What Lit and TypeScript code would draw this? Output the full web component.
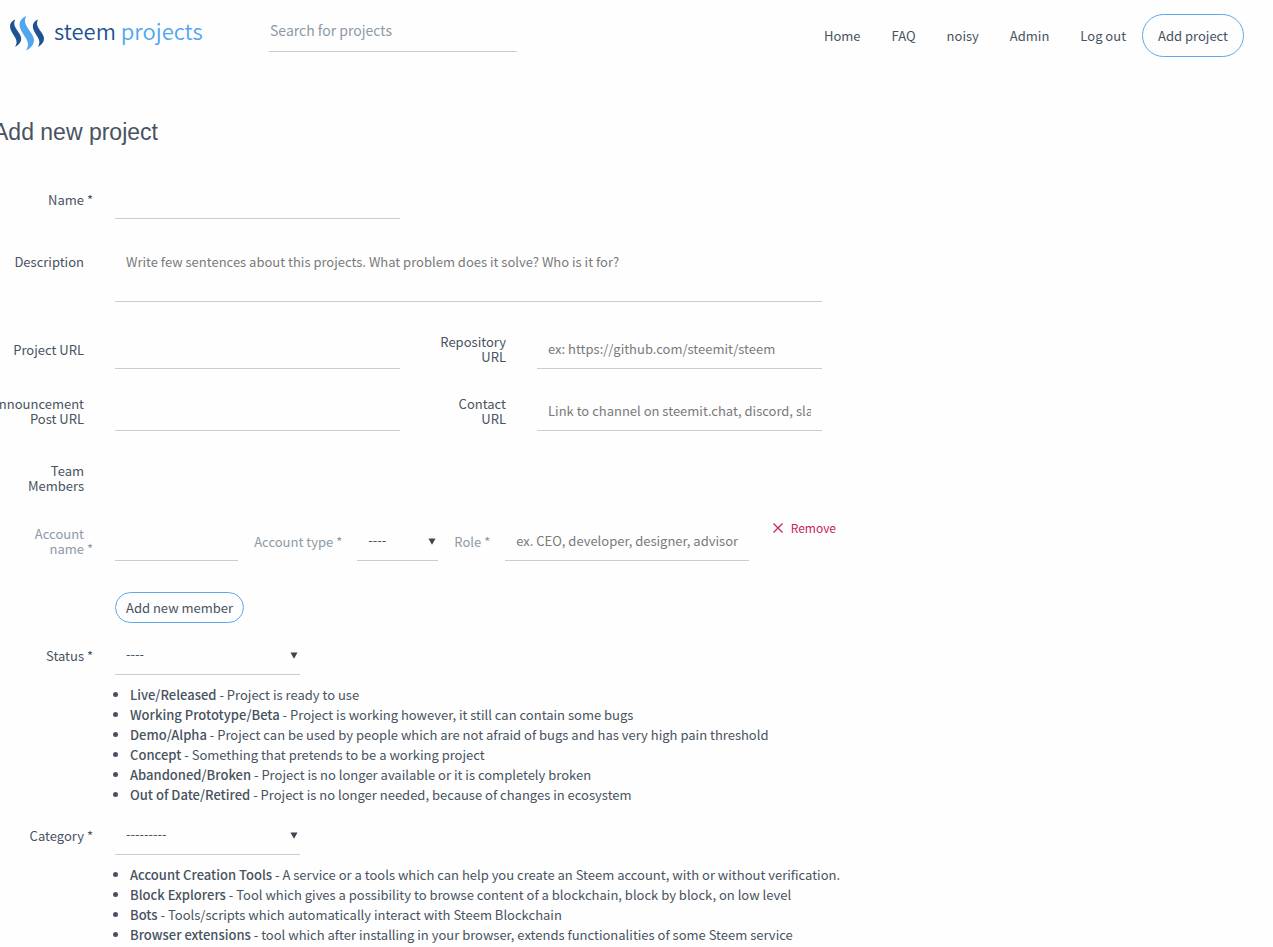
import { LitElement, html, css, svg } from "lit";
import { customElement } from "lit/decorators.js";

type Entry = [name: string, text: string];

const STATUSES: Entry[] = [
  ["Live/Released", "Project is ready to use"],
  ["Working Prototype/Beta", "Project is working however, it still can contain some bugs"],
  ["Demo/Alpha", "Project can be used by people which are not afraid of bugs and has very high pain threshold"],
  ["Concept", "Something that pretends to be a working project"],
  ["Abandoned/Broken", "Project is no longer available or it is completely broken"],
  ["Out of Date/Retired", "Project is no longer needed, because of changes in ecosystem"],
];

const CATEGORIES: Entry[] = [
  ["Account Creation Tools", "A service or a tools which can help you create an Steem account, with or without verification."],
  ["Block Explorers", "Tool which gives a possibility to browse content of a blockchain, block by block, on low level"],
  ["Bots", "Tools/scripts which automatically interact with Steem Blockchain"],
  ["Browser extensions", "tool which after installing in your browser, extends functionalities of some Steem service"],
];

const wave = svg`<path d="M5.2 0C1.5 1.6 0 4 0 7C0 10.5 2.5 13.5 4.8 17.5C6.8 21 7.4 23.5 5 27.4C9 25.4 11.2 22.5 11.2 19.2C11.2 15.8 8.4 13 6 9C4 5.6 3.6 3.4 5.2 0Z"/>`;

@customElement("app-root")
export class AppRoot extends LitElement {
  static styles = css`
    :host {
      display: block;
      overflow: hidden;
      min-height: 100vh;
      background: #fefefe;
      color: #48535f;
      font: 13px/15px "Noto Sans CJK SC", "Noto Sans", sans-serif;
    }
    * { box-sizing: border-box; }
    input, textarea, select, button { font: inherit; color: inherit; }
    a { color: inherit; text-decoration: none; }

    .header {
      display: flex;
      align-items: flex-start;
      padding: 14px 29px 0 10px;
    }
    .logo {
      display: flex;
      align-items: center;
      gap: 9px;
      width: 259px;
      font-size: 22px;
      line-height: 32px;
      font-weight: 350;
      white-space: nowrap;
      color: #1f5293;
    }
    .logo-text { padding-bottom: 6px; }
    .logo-light { color: #52a6ef; }
    .search {
      flex: 0 1 248px;
      height: 38px;
      min-width: 0;
      padding: 0 1px 6px;
      border: 0;
      border-bottom: 1px solid #ccc;
      background: none;
      font-size: 14px;
    }
    .search::placeholder { color: #8d99a6; opacity: 1; }
    .nav {
      display: flex;
      align-items: center;
      gap: 16px;
      margin-left: auto;
    }
    .links { display: flex; gap: 31px; }
    .nav-link { white-space: nowrap; }
    .pill {
      border: 1px solid #5fa8ec;
      border-radius: 22px;
      background: none;
      white-space: nowrap;
    }
    .pill-large { padding: 13px 15px; }
    .pill-small { padding: 7px 10px; border-radius: 16px; }

    .main { margin: 60px 0 0 -10px; }
    .title {
      margin: 0 0 34px;
      padding-left: 3px;
      font: 400 23px/30px "Liberation Sans", sans-serif;
    }
    .row {
      display: grid;
      grid-template-columns: 125px 1fr 137px 1fr;
      align-items: center;
      max-width: 832px;
      margin-bottom: 24px;
    }
    .row-tall { margin-bottom: 29px; }
    .row-choice { margin-bottom: 10px; }
    .label {
      display: block;
      padding: 0 31px 2px 0;
      text-align: right;
    }
    .req { position: relative; }
    .req::after {
      content: "*";
      position: absolute;
      left: 100%;
      padding-left: 3px;
    }
    .field {
      display: block;
      width: 100%;
      min-width: 0;
      height: 38px;
      padding: 0 11px 2px;
      border: 0;
      border-bottom: 1px solid #ccc;
      border-radius: 0;
      background: none;
      outline: none;
    }
    .field::placeholder { color: #7a7a7a; opacity: 1; }
    .area {
      grid-column: 2 / -1;
      height: 59px;
      padding-top: 11px;
      resize: none;
    }
    .area-label { align-self: start; padding-top: 11px; }
    .team { min-height: 48px; margin-bottom: 20px; }

    .select { display: grid; align-items: center; }
    .select > * { grid-area: 1 / 1; }
    .select select { appearance: none; padding-bottom: 4px; }
    .arrow { justify-self: end; margin: 0 2px 2px 0; pointer-events: none; }
    .choice { width: 185px; }

    .member {
      display: grid;
      grid-template-columns: 125px 123fr auto 81fr auto 243fr auto;
      align-items: center;
      max-width: 846px;
      margin-bottom: 31px;
      color: #8d99a6;
    }
    .inline-label { padding: 0 16px 2px; white-space: nowrap; }
    .inline-label .req { margin-right: 8px; }
    .type { color: #48535f; }
    .remove {
      display: flex;
      align-items: center;
      gap: 8px;
      align-self: start;
      margin-left: 24px;
      padding: 0;
      border: 0;
      background: none;
      color: #c4285c;
      font-size: 12px;
      line-height: 10px;
    }
    .add { margin: 0 0 14px 125px; }
    .list {
      margin: 0 0 12px 125px;
      padding: 0 0 0 15px;
      line-height: 20px;
    }
    .list b { font-weight: 500; }
  `;

  private list(entries: Entry[]) {
    return html`<ul class="list">
      ${entries.map(([name, text]) => html`<li><b>${name}</b> - ${text}</li>`)}
    </ul>`;
  }

  private arrow() {
    return html`<svg class="arrow" width="8" height="7" viewBox="0 0 8 7" aria-hidden="true">
      <path d="M0.5 0.5H7.5L4 6.8Z" fill="#3c4650" />
    </svg>`;
  }

  render() {
    return html`
      <header class="header">
        <a class="logo" href="#" aria-label="steem projects">
          <svg width="35" height="38" viewBox="0 0 35 38" aria-hidden="true">
            <g fill="#1f5293" transform="translate(0 5.5)">${wave}</g>
            <g fill="#52a6ef" transform="translate(9.6 2) scale(1.28 1.26)">${wave}</g>
            <g fill="#1f5293" transform="translate(22.8 5.5)">${wave}</g>
          </svg>
          <span class="logo-text">steem <span class="logo-light">projects</span></span>
        </a>
        <input class="search" type="text" aria-label="Search for projects" placeholder="Search for projects" />
        <nav class="nav">
          <div class="links">
            <a class="nav-link" href="#">Home</a>
            <a class="nav-link" href="#">FAQ</a>
            <a class="nav-link" href="#">noisy</a>
            <a class="nav-link" href="#">Admin</a>
            <a class="nav-link" href="#">Log out</a>
          </div>
          <button class="pill pill-large" type="button">Add project</button>
        </nav>
      </header>
      <main class="main">
        <h1 class="title">Add new project</h1>
        <form>
          <div class="row">
            <label class="label" for="name"><span class="req">Name</span></label>
            <input class="field" id="name" type="text" />
          </div>
          <div class="row row-tall">
            <label class="label area-label" for="description">Description</label>
            <textarea class="field area" id="description"
              placeholder="Write few sentences about this projects. What problem does it solve? Who is it for?"></textarea>
          </div>
          <div class="row">
            <label class="label" for="project-url">Project URL</label>
            <input class="field" id="project-url" type="text" />
            <label class="label" for="repo-url">Repository<br />URL</label>
            <input class="field" id="repo-url" type="text" placeholder="ex: https://github.com/steemit/steem" />
          </div>
          <div class="row">
            <label class="label" for="post-url">Announcement<br />Post URL</label>
            <input class="field" id="post-url" type="text" />
            <label class="label" for="contact-url">Contact<br />URL</label>
            <input class="field" id="contact-url" type="text"
              placeholder="Link to channel on steemit.chat, discord, slack" />
          </div>
          <div class="row team">
            <span class="label">Team<br />Members</span>
          </div>
          <div class="member">
            <label class="label" for="account">Account<br /><span class="req">name</span></label>
            <input class="field" id="account" type="text" />
            <label class="inline-label" for="type"><span class="req">Account type</span></label>
            <div class="select type">
              <select class="field" id="type"><option>----</option></select>
              ${this.arrow()}
            </div>
            <label class="inline-label" for="role"><span class="req">Role</span></label>
            <input class="field" id="role" type="text" placeholder="ex. CEO, developer, designer, advisor" />
            <button class="remove" type="button">
              <svg width="10" height="10" viewBox="0 0 10 10" aria-hidden="true">
                <path d="M0.5 0.5L9.5 9.5M9.5 0.5L0.5 9.5" stroke="#c4285c" stroke-width="1.3" />
              </svg>
              Remove
            </button>
          </div>
          <button class="pill pill-small add" type="button">Add new member</button>
          <div class="row row-choice">
            <label class="label" for="status"><span class="req">Status</span></label>
            <div class="select choice">
              <select class="field" id="status"><option>----</option></select>
              ${this.arrow()}
            </div>
          </div>
          ${this.list(STATUSES)}
          <div class="row row-choice">
            <label class="label" for="category"><span class="req">Category</span></label>
            <div class="select choice">
              <select class="field" id="category"><option>---------</option></select>
              ${this.arrow()}
            </div>
          </div>
          ${this.list(CATEGORIES)}
        </form>
      </main>
    `;
  }
}
